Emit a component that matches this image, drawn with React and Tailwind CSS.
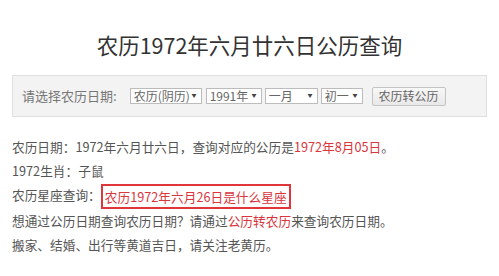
const FONT = "font-['Noto_Sans_CJK_SC','Noto_Sans',sans-serif]";

const FakeSelect = ({ label, width }) => (
  <div
    className={`flex items-center justify-between h-[16px] ${width} bg-white border border-[#bcbcbc] pl-[3px] pr-[4px] text-[12px] leading-none text-[#666]`}
  >
    <span>{label}</span>
    <span className="text-[5px] text-[#444] self-start mt-[3px]">▼</span>
  </div>
);

const App = () => {
  return (
    <div className={`w-[499px] h-[276px] bg-white overflow-hidden ${FONT}`}>
      {/* Title */}
      <h1 className="pt-[30px] h-[60px] leading-[30px] text-center text-[21.5px] text-[#333] font-normal">
        农历1972年六月廿六日公历查询
      </h1>

      <div className="px-[12px] mt-[15px]">
        {/* Query bar */}
        <div className="h-[42px] flex items-center bg-[#f3f3f3] border border-[#e0e0e0] pl-[9px]">
          <span className="text-[13px] text-[#777] mr-[13px]">请选择农历日期:</span>
          <div className="flex items-center">
            <FakeSelect label="农历(阴历)" width="w-[72px]" />
            <div className="w-[4px]" />
            <FakeSelect label="1991年" width="w-[56px]" />
            <div className="w-[3px]" />
            <FakeSelect label="一月" width="w-[53px]" />
            <div className="w-[3px]" />
            <FakeSelect label="初一" width="w-[42px]" />
            <div className="w-[9px]" />
            <button className="h-[19px] w-[74px] border border-[#c4c4c4] rounded-[2px] bg-gradient-to-b from-[#f8f8f8] to-[#e8e8e8] text-[12px] leading-none text-[#666]">
              农历转公历
            </button>
          </div>
        </div>

        {/* Result */}
        <div className="mt-[18px] text-[12.7px] leading-[24px] text-[#555]">
          <p>
            农历日期：1972年六月廿六日，查询对应的公历是
            <span className="text-[#d9363e]">1972年8月05日</span>。
          </p>
          <p>1972生肖：子鼠</p>
          <p>
            农历星座查询：
            <span className="inline-block align-middle leading-[21px] border-2 border-[#e0353b] px-[2px] text-[#d9363e]">
              农历1972年六月26日是什么星座
            </span>
          </p>
          <p>
            想通过公历日期查询农历日期？请通过
            <span className="text-[#d9363e]">公历转农历</span>
            来查询农历日期。
          </p>
          <p>搬家、结婚、出行等黄道吉日，请关注老黄历。</p>
        </div>
      </div>

      <div className="mt-[19px] h-[2px] bg-[#eeeeee]" />
    </div>
  );
};

export default App;
